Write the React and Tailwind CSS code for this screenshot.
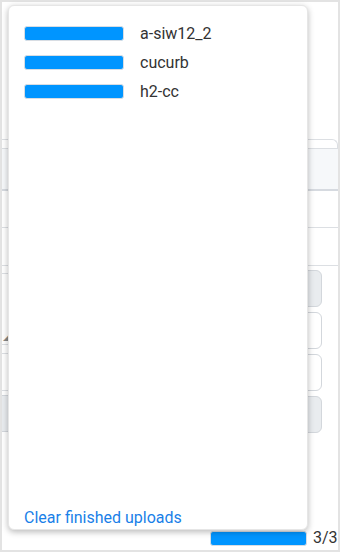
import React from 'react';

const UPLOADS = ['a-siw12_2', 'cucurb', 'h2-cc'];

const Bar = ({ className = '' }) => (
  <div className={`h-[15px] rounded-[3px] border border-[#d8dde3] bg-[#0095ff] ${className}`} />
);

const App = () => {
  return (
    <div className="relative w-[340px] h-[554px] bg-white overflow-hidden" style={{ fontFamily: 'Roboto, "Liberation Sans", sans-serif' }}>
      {/* page behind the popup */}
      <div className="h-[552px] border-2 border-[#e3e3e3] flex flex-col">
        <div className="h-[137px]" />
        <div className="h-[9px] border-t border-r border-[#dcdfe3] rounded-tr-md" />
        <div className="h-[43px] bg-[#f6f8fa] border-t border-[#dcdfe3] border-b-2 border-b-[#d6dae0]" />
        <div className="h-[37px] border-b border-[#dcdfe3]" />
        <div className="h-[38px] border-b border-[#dcdfe3]" />
        <div className="flex mt-[7px] gap-[3px]">
          <div className="flex-1 flex flex-col">
            <div className="relative h-[72px] border-y border-[#dcdfe3]">
              <span className="absolute left-[1px] bottom-[2px] text-[8px] leading-none text-[#888]">◢</span>
            </div>
            <div className="mt-[8px] h-[38px] border-y border-[#dcdfe3]" />
            <div className="mt-[4px] h-[37px] bg-[#e9ecef] border-y border-[#d3d7dc]" />
          </div>
          <div className="w-[17px] mr-[16px] flex flex-col gap-[5px] -mt-[3px]">
            <div className="h-[37px] rounded-r-md bg-[#e9ecef] border border-[#d3d7dc]" />
            <div className="h-[37px] rounded-r-md border border-[#d3d7dc]" />
            <div className="h-[37px] rounded-r-md border border-[#d3d7dc]" />
            <div className="h-[37px] rounded-r-md bg-[#e9ecef] border border-[#d3d7dc]" />
          </div>
        </div>
        <div className="flex-1" />
        <div className="flex items-center pl-[208px] pb-[4px]">
          <Bar className="w-[97px] shrink-0" />
          <span className="ml-[6px] text-[16px] leading-none text-[#333] whitespace-nowrap">3/3</span>
        </div>
      </div>

      {/* uploads popup */}
      <div className="absolute left-[8px] top-[5px] w-[300px] h-[525px] bg-white rounded-md border border-[#e6e6e6] shadow-[0_2px_6px_rgba(0,0,0,0.28)] flex flex-col px-[15px] pt-[19px] pb-[1px]">
        <div className="flex flex-col gap-[12px]">
          {UPLOADS.map(name => (
            <div key={name} className="flex items-center">
              <Bar className="w-[100px]" />
              <span className="ml-[16px] text-[16px] leading-none text-[#333] pt-[1px]">{name}</span>
            </div>
          ))}
        </div>
        <div className="flex-1" />
        <button className="self-start text-[16px] leading-[20px] text-[#1a7fe8]">
          Clear finished uploads
        </button>
      </div>
    </div>
  );
};

export default App;
